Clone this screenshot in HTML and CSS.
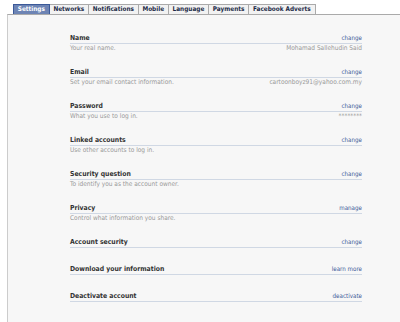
FILE: index.html
```html
<!DOCTYPE html>
<html>
  <head>
    <meta charset="UTF-8" />
    <title>Account Settings</title>
    <link rel="stylesheet" href="styles.css">
  </head>
  <body>
    <div class="page">
      <div class="tabs">
        <div class="tab active">Settings</div>
        <div class="tab">Networks</div>
        <div class="tab">Notifications</div>
        <div class="tab">Mobile</div>
        <div class="tab">Language</div>
        <div class="tab">Payments</div>
        <div class="tab">Facebook Adverts</div>
      </div>

      <div class="panel">
        <div class="settings">
          <div class="row">
            <div class="row-head"><span class="label">Name</span><a class="action">change</a></div>
            <div class="row-sub"><span>Your real name.</span><span>Mohamad Sallehudin Said</span></div>
          </div>
          <div class="row">
            <div class="row-head"><span class="label">Email</span><a class="action">change</a></div>
            <div class="row-sub"><span>Set your email contact information.</span><span>cartoonboyz91@yahoo.com.my</span></div>
          </div>
          <div class="row">
            <div class="row-head"><span class="label">Password</span><a class="action">change</a></div>
            <div class="row-sub"><span>What you use to log in.</span><span>********</span></div>
          </div>
          <div class="row">
            <div class="row-head"><span class="label">Linked accounts</span><a class="action">change</a></div>
            <div class="row-sub"><span>Use other accounts to log in.</span></div>
          </div>
          <div class="row">
            <div class="row-head"><span class="label">Security question</span><a class="action">change</a></div>
            <div class="row-sub"><span>To identify you as the account owner.</span></div>
          </div>
          <div class="row">
            <div class="row-head"><span class="label">Privacy</span><a class="action">manage</a></div>
            <div class="row-sub"><span>Control what information you share.</span></div>
          </div>
          <div class="row short">
            <div class="row-head"><span class="label">Account security</span><a class="action">change</a></div>
          </div>
          <div class="row short">
            <div class="row-head"><span class="label">Download your information</span><a class="action">learn more</a></div>
          </div>
          <div class="row short">
            <div class="row-head"><span class="label">Deactivate account</span><a class="action">deactivate</a></div>
          </div>
        </div>
      </div>
    </div>
  </body>
</html>
```

FILE: styles.css
```css
* {
  box-sizing: border-box;
  margin: 0;
  padding: 0;
}

body {
  background: #ffffff;
  color: #333333;
  font-family: "DejaVu Sans Condensed", "DejaVu Sans", Verdana, sans-serif;
  font-size: 7px;
  width: 400px;
  height: 322px;
  overflow: hidden;
}

.page {
  padding-top: 4px;
  padding-left: 7px;
}

.tabs {
  display: flex;
  padding-left: 6px;
  height: 10px;
}

.tab {
  background: #f2f2f2;
  border: 1px solid #aaaaaa;
  border-bottom: none;
  border-left: none;
  color: #1c2a47;
  font-weight: bold;
  font-size: 6.4px;
  line-height: 9px;
  padding: 0 3.75px;
}

.tab:first-child {
  border-left: 1px solid #aaaaaa;
}

.tab.active {
  background: #6d84b4;
  border-color: #3b5998;
  color: #ffffff;
}

.panel {
  background: #f7f7f7;
  border-top: 1px solid #aaaaaa;
  border-left: 1px solid #cccccc;
  height: 308px;
}

.settings {
  width: 354px;
  padding-left: 62px;
  padding-top: 17px;
}

.row {
  margin-bottom: 13px;
}

.row.short {
  margin-bottom: 15px;
}

.row-head {
  display: flex;
  justify-content: space-between;
  align-items: flex-end;
  height: 12px;
  line-height: 10px;
  border-bottom: 1px solid #d0d8e4;
}

.label {
  font-weight: bold;
  font-size: 6.8px;
  color: #333333;
}

.action {
  color: #3b5998;
  font-size: 6.2px;
  cursor: pointer;
}

.row-sub {
  display: flex;
  justify-content: space-between;
  height: 9px;
  line-height: 9px;
  color: #999999;
  font-size: 6.5px;
}
```
